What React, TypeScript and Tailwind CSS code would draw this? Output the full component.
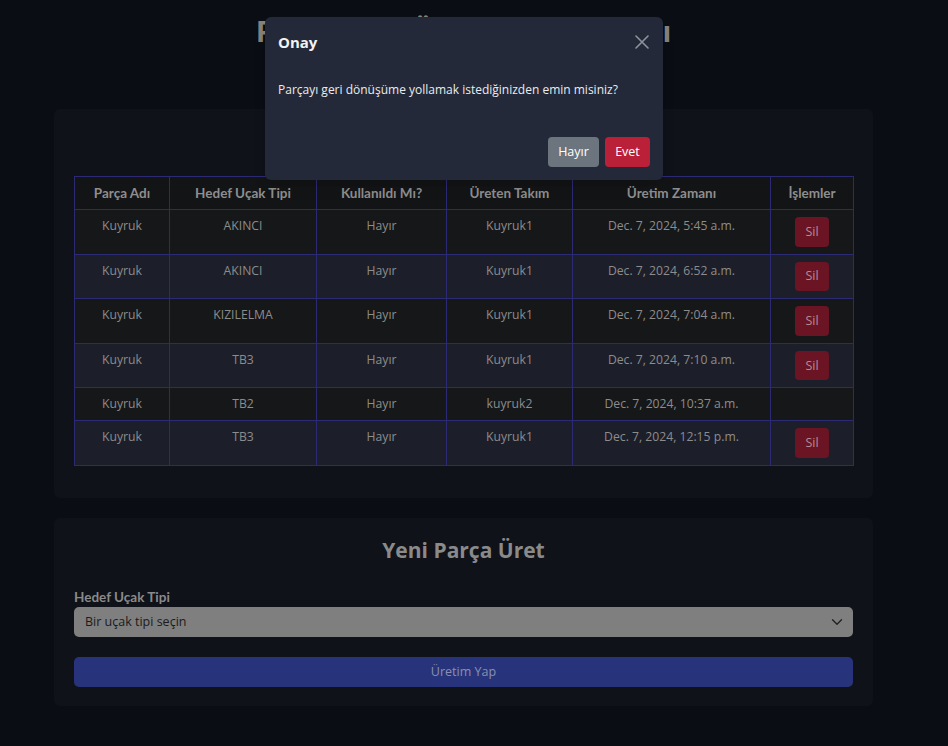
import React from "react";

const rows = [
  { ad: "Kuyruk", tip: "AKINCI", kul: "Hayır", takim: "Kuyruk1", zaman: "Dec. 7, 2024, 5:45 a.m.", sil: true },
  { ad: "Kuyruk", tip: "AKINCI", kul: "Hayır", takim: "Kuyruk1", zaman: "Dec. 7, 2024, 6:52 a.m.", sil: true },
  { ad: "Kuyruk", tip: "KIZILELMA", kul: "Hayır", takim: "Kuyruk1", zaman: "Dec. 7, 2024, 7:04 a.m.", sil: true },
  { ad: "Kuyruk", tip: "TB3", kul: "Hayır", takim: "Kuyruk1", zaman: "Dec. 7, 2024, 7:10 a.m.", sil: true },
  { ad: "Kuyruk", tip: "TB2", kul: "Hayır", takim: "kuyruk2", zaman: "Dec. 7, 2024, 10:37 a.m.", sil: false },
  { ad: "Kuyruk", tip: "TB3", kul: "Hayır", takim: "Kuyruk1", zaman: "Dec. 7, 2024, 12:15 p.m.", sil: true },
];

const headers = ["Parça Adı", "Hedef Uçak Tipi", "Kullanıldı Mı?", "Üreten Takım", "Üretim Zamanı", "İşlemler"];
const widths = ["w-[95px]", "w-[147px]", "w-[130px]", "w-[126px]", "w-[198px]", "w-[83px]"];

export default function App() {
  return (
    <div className="relative min-h-[746px] bg-[#0a0d14] font-['Open_Sans',sans-serif]">
      <div className="w-[927px]">
        <div className="mx-auto w-[819px] pt-[14px] pb-[40px]">
          <h1 className="whitespace-nowrap text-center text-[29px] font-bold leading-[34px] text-[#86827a]">
            Parçaların Üretim Durumları
          </h1>

          <div className="mt-[61px] rounded-[6px] bg-[#0f1219] px-[20px] pt-[20px] pb-[32px]">
            <h2 className="mb-[19px] text-center text-[21px] font-bold leading-[28px] text-[#8a8a8a]">
              Üretilen Parçalar
            </h2>
            <table className="w-[779px] table-fixed border-collapse">
              <colgroup>
                {widths.map((w, i) => (
                  <col key={i} className={w} />
                ))}
              </colgroup>
              <thead>
                <tr className="bg-[#131416]">
                  {headers.map((h) => (
                    <th
                      key={h}
                      className="border border-[#2c2a74] px-[6px] py-[7px] text-center align-top font-['Lato',sans-serif] text-[13.5px] font-bold leading-[18px] text-[#8e8e8e]"
                    >
                      {h}
                    </th>
                  ))}
                </tr>
              </thead>
              <tbody>
                {rows.map((r, i) => (
                  <tr key={i} className={i % 2 === 0 ? "bg-[#161719]" : "bg-[#1c1f2a]"}>
                    {[r.ad, r.tip, r.kul, r.takim, r.zaman].map((c, j) => (
                      <td
                        key={j}
                        className="border border-[#2c2a74] px-[6px] py-[7px] text-center align-top text-[12.2px] leading-[18px] text-[#8c8c8c]"
                      >
                        {c}
                      </td>
                    ))}
                    <td className="border border-[#2c2a74] px-[6px] py-[7px] text-center align-top leading-[0]">
                      {r.sil ? (
                        <button className="h-[29.6px] w-[34px] rounded-[4px] bg-[#6b1424] text-[12.5px] leading-[18px] text-[#b48c95]">
                          Sil
                        </button>
                      ) : (
                        <span className="block h-[18px]" />
                      )}
                    </td>
                  </tr>
                ))}
              </tbody>
            </table>
          </div>

          <div className="mt-[20px] rounded-[6px] bg-[#0f1219] px-[20px] pt-[18px] pb-[19px]">
            <h2 className="text-center text-[21px] font-bold leading-[28px] text-[#8a8a8a]">
              Yeni Parça Üret
            </h2>
            <label className="mt-[24px] block font-['Lato',sans-serif] text-[13.5px] font-bold leading-[19px] text-[#8a8a8a]">
              Hedef Uçak Tipi
            </label>
            <div className="flex h-[30px] items-center justify-between rounded-[5px] bg-[#7f7f7f] pl-[11px] pr-[10px]">
              <span className="text-[12.5px] text-[#1b1b1b]">Bir uçak tipi seçin</span>
              <svg width="12" height="12" viewBox="0 0 16 16" fill="none">
                <path d="M2 5l6 6 6-6" stroke="#222" strokeWidth="1.8" strokeLinecap="round" strokeLinejoin="round" />
              </svg>
            </div>
            <button className="mt-[20px] flex h-[30px] w-full items-center justify-center rounded-[5px] bg-[#27347b] text-[12.5px] text-[#8a90b0]">
              Üretim Yap
            </button>
          </div>
        </div>
      </div>

      <div className="absolute left-[265px] top-[17px] w-[398px] rounded-[6px] bg-[#232939] shadow-lg">
        <div className="flex items-center justify-between px-[13px] pt-[13px]">
          <h3 className="text-[15px] font-bold leading-[24px] text-[#f2f2f2]">Onay</h3>
          <button className="flex h-[16px] w-[16px] items-center justify-center">
            <svg width="14" height="14" viewBox="0 0 14 14" fill="none">
              <path d="M1 1l12 12M13 1L1 13" stroke="#8d939e" strokeWidth="1.6" strokeLinecap="round" />
            </svg>
          </button>
        </div>
        <p className="px-[13px] pt-[27px] text-[12px] leading-[18px] text-[#ececec]">
          Parçayı geri dönüşüme yollamak istediğinizden emin misiniz?
        </p>
        <div className="flex justify-end gap-[6px] px-[13px] pt-[38px] pb-[13px]">
          <button className="h-[30px] w-[51px] rounded-[4px] bg-[#6c757d] text-[12.5px] text-white">Hayır</button>
          <button className="h-[30px] w-[45px] rounded-[4px] bg-[#bb2039] text-[12.5px] text-white">Evet</button>
        </div>
      </div>
    </div>
  );
}
